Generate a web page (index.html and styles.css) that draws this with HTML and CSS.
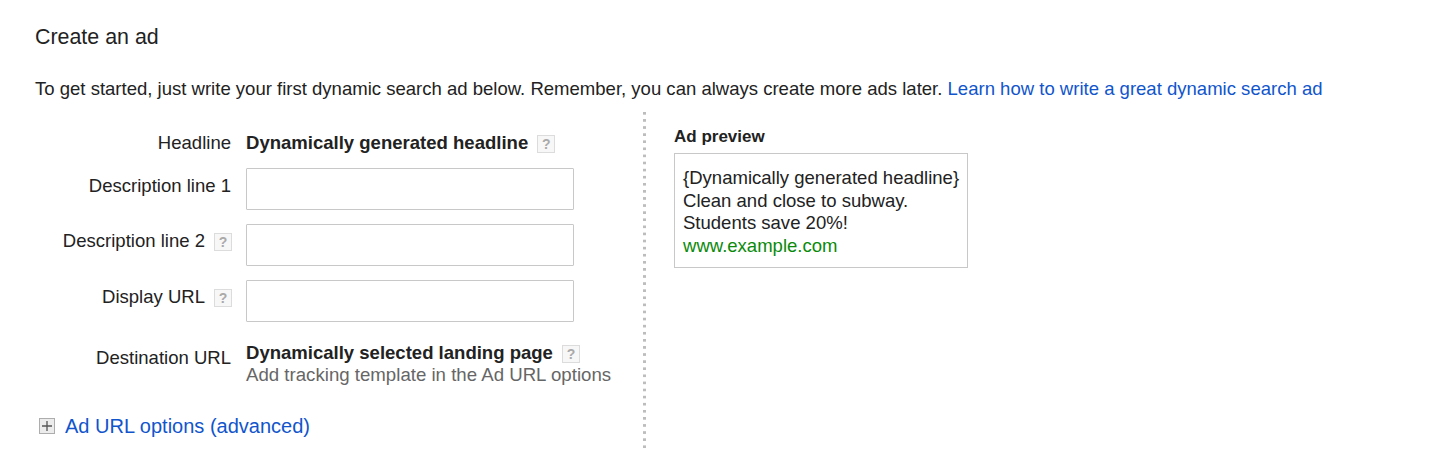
FILE: index.html
```html
<!DOCTYPE html>
<html lang="en">
<head>
<meta charset="utf-8">
<title>Create an ad</title>
<link rel="stylesheet" href="styles.css">
</head>
<body>
<main class="page">
  <h1 class="title">Create an ad</h1>
  <p class="intro">To get started, just write your first dynamic search ad below. Remember, you can always create more ads later. <a href="#">Learn how to write a great dynamic search ad</a></p>
  <div class="columns">
    <section class="left">
      <div class="form">
        <div class="label label-headline">Headline</div>
        <div class="value value-headline"><b>Dynamically generated headline</b><span class="help">?</span></div>
        <div class="label label-input label-first">Description line 1</div>
        <div class="field"></div>
        <div class="label label-input">Description line 2<span class="help">?</span></div>
        <div class="field"></div>
        <div class="label label-input">Display URL<span class="help">?</span></div>
        <div class="field"></div>
        <div class="label label-dest">Destination URL</div>
        <div class="value value-dest"><b>Dynamically selected landing page</b><span class="help">?</span><div class="hint">Add tracking template in the Ad URL options</div></div>
      </div>
      <div class="options">
        <svg class="plus" width="16" height="16" viewBox="0 0 16 16"><rect x="0.5" y="0.5" width="15" height="15" fill="#ececec" stroke="#adadad"/><path d="M3 8h10M8 3v10" stroke="#555" stroke-width="1.3" fill="none"/></svg>
        <a href="#">Ad URL options (advanced)</a>
      </div>
    </section>
    <div class="divider"></div>
    <aside class="preview">
      <h2 class="preview-title">Ad preview</h2>
      <div class="ad">
        <div>{Dynamically generated headline}</div>
        <div>Clean and close to subway.</div>
        <div>Students save 20%!</div>
        <div class="ad-url">www.example.com</div>
      </div>
    </aside>
  </div>
</main>
</body>
</html>
```
FILE: styles.css
```css
* { box-sizing: border-box; }
html, body { margin: 0; padding: 0; background: #fff; }
body {
  font-family: "Liberation Sans", Arial, sans-serif;
  font-size: 18.55px;
  color: #222;
  height: 469px;
  overflow: hidden;
}
a { color: #1155cc; text-decoration: none; }
.page { padding: 25px 0 0 35px; }
.title { margin: 0; font-size: 21.4px; font-weight: 400; line-height: 24px; }
.intro { margin: 28px 0 0; line-height: 24px; font-size: 18.55px; white-space: nowrap; }
.columns { display: flex; margin-top: 11px; height: 340px; }
.left { width: 608px; display: flex; flex-direction: column; }
.form {
  display: grid;
  grid-template-columns: 196px 328px;
  column-gap: 15px;
  align-content: start;
}
.label { text-align: right; line-height: 22px; white-space: nowrap; }
.label-headline { padding-top: 20px; height: 56px; }
.label-input { padding-top: 6px; height: 56px; }
.label-first { padding-top: 7px; }
.label-dest { padding-top: 11px; }
.label .help { margin-right: -1px; }
.value { line-height: 22px; white-space: nowrap; }
.value-headline { padding-top: 20px; height: 56px; }
.value-dest { padding-top: 6px; }
.field {
  height: 42px;
  background: #fff;
  border: 1px solid #c8c8c8;
  border-radius: 1px;
}
.help {
  display: inline-block;
  width: 18px;
  height: 18px;
  margin-left: 9px;
  vertical-align: 0;
  border: 1px solid #dcdcdc;
  background: #f7f7f7;
  color: #aaa;
  font-size: 14px;
  font-weight: 700;
  line-height: 16px;
  text-align: center;
}
.hint { color: #666; line-height: 22px; font-size: 18.65px; }
.options { display: flex; align-items: center; gap: 10px; margin-top: 28px; padding-left: 4px; font-size: 20px; line-height: 24px; }
.divider {
  width: 3px;
  height: 340px;
  background-image: linear-gradient(to bottom, #bdbdbd 0, #bdbdbd 3px, transparent 3px);
  background-size: 3px 7.1px;
  background-repeat: repeat-y;
}
.preview { margin-left: 28px; }
.preview-title { margin: 15px 0 0; font-size: 17px; font-weight: 700; line-height: 20px; }
.ad {
  width: 294px;
  height: 115px;
  margin-top: 6px;
  padding: 13px 8px 0;
  border: 1px solid #c8c8c8;
  line-height: 22.5px;
  white-space: nowrap;
}
.ad-url { color: #0a8a0a; }
```
